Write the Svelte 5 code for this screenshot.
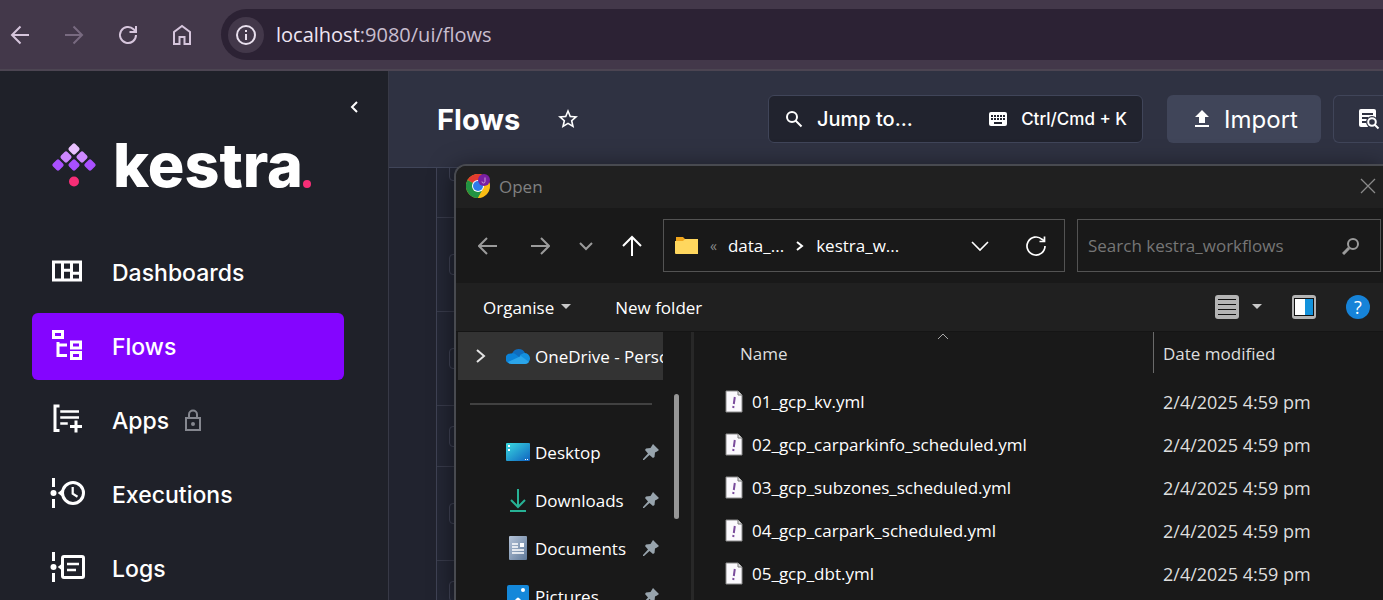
<script>
  const nav = [
    { label: 'Dashboards', icon: 'dashboard' },
    { label: 'Flows', icon: 'flows', active: true },
    { label: 'Apps', icon: 'apps', locked: true },
    { label: 'Executions', icon: 'executions' },
    { label: 'Logs', icon: 'logs' }
  ];
  const rows = [94, 94, 94, 61, 94, 61];
  const places = ['Desktop', 'Downloads', 'Documents', 'Pictures'];
  const files = [
    '01_gcp_kv.yml',
    '02_gcp_carparkinfo_scheduled.yml',
    '03_gcp_subzones_scheduled.yml',
    '04_gcp_carpark_scheduled.yml',
    '05_gcp_dbt.yml'
  ];
</script>

<div class="screen">
  <header class="browser">
    <button class="tool" aria-label="Back">
      <svg width="24" height="24" viewBox="0 0 24 24" fill="none" stroke="#d6c5dc" stroke-width="2"><path d="M21 12H4.500M12.500 3.500 4 12l8.500 8.500" /></svg>
    </button>
    <button class="tool" aria-label="Forward">
      <svg width="24" height="24" viewBox="0 0 24 24" fill="none" stroke="#786a80" stroke-width="2"><path d="M3 12h16.500M11.500 3.500 20 12l-8.500 8.500" /></svg>
    </button>
    <button class="tool" aria-label="Reload">
      <svg width="24" height="24" viewBox="0 0 24 24" fill="none" stroke="#d6c5dc" stroke-width="2"><path d="M20 12a8 8 0 1 1-2.400-5.700L20 8.600" /><path d="M20 3v6h-6.500" /></svg>
    </button>
    <button class="tool" aria-label="Home">
      <svg width="24" height="24" viewBox="0 0 24 24" fill="none" stroke="#d6c5dc" stroke-width="2"><path d="M4 21V9l8-6 8 6v12h-5.500v-7h-5v7z" /></svg>
    </button>
    <div class="omnibox">
      <span class="info">
        <svg width="22" height="22" viewBox="0 0 22 22" fill="none" stroke="#e9e0ee" stroke-width="2"><circle cx="11" cy="11" r="9" /><path d="M11 10v6M11 6v2" /></svg>
      </span>
      <span class="url"><b>localhost</b>:9080/ui/flows</span>
    </div>
  </header>

  <div class="app">
    <aside>
      <button class="collapse" aria-label="Collapse menu">
        <svg width="12" height="14" viewBox="0 0 12 14" fill="none" stroke="#fff" stroke-width="2"><path d="M9 2 4 7l5 5" /></svg>
      </button>
      <a class="logo" href="#home">
        <svg width="44" height="46" viewBox="0 0 44 46">
          <g fill="#e9c1ff"><rect x="-4.500" y="-4.500" width="9" height="9" rx="2" transform="translate(22 7) rotate(45)" /></g>
          <g fill="#cd88ff">
            <rect x="-4.500" y="-4.500" width="9" height="9" rx="2" transform="translate(14 15) rotate(45)" />
            <rect x="-4.500" y="-4.500" width="9" height="9" rx="2" transform="translate(30 15) rotate(45)" />
          </g>
          <g fill="#a950ff">
            <rect x="-4.500" y="-4.500" width="9" height="9" rx="2" transform="translate(6 23) rotate(45)" />
            <rect x="-4.500" y="-4.500" width="9" height="9" rx="2" transform="translate(22 23) rotate(45)" />
            <rect x="-4.500" y="-4.500" width="9" height="9" rx="2" transform="translate(38 23) rotate(45)" />
          </g>
          <circle cx="22" cy="39.500" r="5" fill="#f62e76" />
        </svg>
        <span class="word">kestra</span><i class="dot"></i>
      </a>
      <nav>
        {#each nav as item}
          <a href="#{item.icon}" class:active={item.active}>
            <svg class="glyph" width="36" height="36" viewBox="0 0 24 24" fill="none" stroke="#fff" stroke-width="2">
              {#if item.icon === 'dashboard'}
                <path d="M3 6h18v12H3zM9 6v12M15 6v12M9 11.500h6M15 13.500h6" />
              {:else if item.icon === 'flows'}
                <path stroke="none" fill="#fff" d="M12,13H7V18H12V20H5V10H7V11H12V13M8,4V6H4V4H8M10,2H2V8H10V2M20,11V13H16V11H20M22,9H14V15H22V9M20,18V20H16V18H20M22,16H14V22H22V16Z" />
              {:else if item.icon === 'apps'}
                <path d="M7 3.300H4v16.400h3" />
                <path stroke-width="1.700" d="M7.500 7H20M7.500 11H20M7.500 15h5" />
                <path stroke="#1f2129" stroke-width="5" d="M18 13v8M14 17h8" />
                <path d="M18 13v8M14 17h8" />
              {:else}
                <path d="M3 2v6M3 16v6" />
                <circle cx="3" cy="12" r="2" fill="#fff" stroke="none" />
                <path d="M5.800 12 9 9.500v5z" fill="#fff" stroke="none" />
                {#if item.icon === 'executions'}
                  <circle cx="16" cy="12" r="7" />
                  <path stroke-width="1.500" d="M15.800 8v4.500l3.200 2" />
                {:else}
                  <rect x="9" y="5" width="14" height="14" rx="1" />
                  <path stroke-width="1.700" d="M12 10h8M12 14h6" />
                {/if}
              {/if}
            </svg>
            <span>{item.label}</span>
            {#if item.locked}
              <svg class="lock" width="24" height="24" viewBox="0 0 24 24" fill="none" stroke="#85878f" stroke-width="2"><path d="M5 9h14v12H5zM8 9V5.500a4 4 0 0 1 8 0V9" /><circle cx="12" cy="15" r="1" /></svg>
            {/if}
          </a>
        {/each}
      </nav>
    </aside>

    <main>
      <div class="topbar">
        <h1>Flows</h1>
        <button class="star" aria-label="Bookmark">
          <svg width="24" height="24" viewBox="0 0 24 24" fill="#fff"><path d="M12,15.39L8.24,17.66L9.23,13.38L5.91,10.5L10.29,10.13L12,6.09L13.71,10.13L18.09,10.5L14.77,13.38L15.76,17.66M22,9.24L14.81,8.63L12,2L9.19,8.63L2,9.24L7.45,13.97L5.82,21L12,17.27L18.18,21L16.54,13.97L22,9.24Z" /></svg>
        </button>
        <button class="jump">
          <svg width="20" height="20" viewBox="0 0 20 20" fill="none" stroke="#fff" stroke-width="2"><circle cx="8" cy="8" r="5" /><path d="m11.500 11.500 6 6" /></svg>
          <span>Jump to...</span>
          <span class="keys">
            <svg width="20" height="16" viewBox="0 0 20 16"><rect x="1" y="1" width="18" height="14" rx="2" fill="#fff" /><path stroke="#21232e" stroke-width="2" stroke-dasharray="2 1" d="M3 5h14M3 8h14" /><path stroke="#21232e" stroke-width="2" d="M6 12h8" /></svg>
            Ctrl/Cmd + K
          </span>
        </button>
        <button class="import">
          <svg width="24" height="24" viewBox="0 0 24 24" fill="#fff"><path d="M9 16v-6H5l7-7 7 7h-4v6H9m-4 4v-2h14v2H5z" /></svg>
          <span>Import</span>
        </button>
        <button class="source" aria-label="Source search">
          <svg width="24" height="24" viewBox="0 0 24 24"><path fill="#fff" d="M5 2h13a2 2 0 0 1 2 2v16H5a2 2 0 0 1-2-2V4a2 2 0 0 1 2-2z" /><path stroke="#2f3242" stroke-width="2" d="M6 7h11M6 11h6M6 15h4" /><circle cx="16" cy="15" r="6" fill="#2f3242" /><path stroke="#2f3242" stroke-width="5" d="m17 16 5 6" /><circle cx="16" cy="15" r="3.800" fill="none" stroke="#fff" stroke-width="2" /><path stroke="#fff" stroke-width="2" d="m18.500 17.500 4 4" /></svg>
        </button>
      </div>
      <div class="content">
        <div class="rows">
          {#each rows as h, i}
            <div class="row" style="height: {h}px"><input type="checkbox" aria-label="Select flow {i + 1}" /></div>
          {/each}
        </div>
      </div>
    </main>
  </div>

  <section class="dialog" aria-label="Open">
    <div class="title">
      <svg width="24" height="24" viewBox="0 0 24 24">
        <circle cx="12" cy="12" r="12" fill="#f9bd15" />
        <path fill="#e33b2e" d="M12 12 1.600 6A12 12 0 0 1 22.400 6z" />
        <path fill="#229342" d="M12 12 1.600 6A12 12 0 0 0 12 24l5-9z" />
        <path fill="#f9bd15" d="m17 15-5 9A12 12 0 0 0 22.400 7H13z" />
        <circle cx="12" cy="12" r="6" fill="#fff" />
        <circle cx="12" cy="12" r="5" fill="#2f7bea" />
        <circle cx="18" cy="6" r="6" fill="#7a1fa2" />
        <path d="M19 3.500v4a1.500 1.500 0 0 1-3 0" fill="none" stroke="#c9a0da" />
      </svg>
      <span>Open</span>
      <button class="close" aria-label="Close">
        <svg width="16" height="16" viewBox="0 0 16 16" stroke="#8a8a8a" stroke-width="1.300"><path d="m1 1 14 14M15 1 1 15" /></svg>
      </button>
    </div>

    <div class="pathbar">
      <div class="arrows">
        <button aria-label="Back"><svg width="20" height="20" viewBox="0 0 20 20" fill="none" stroke="#9b9b9b" stroke-width="2"><path d="M19 10H2M9 2l-8 8 8 8" /></svg></button>
        <button aria-label="Forward"><svg width="20" height="20" viewBox="0 0 20 20" fill="none" stroke="#9b9b9b" stroke-width="2"><path d="M1 10h17M11 2l8 8-8 8" /></svg></button>
        <button aria-label="Recent locations"><svg width="14" height="20" viewBox="0 0 14 20" fill="none" stroke="#9b9b9b" stroke-width="2"><path d="m1 7 6 6 6-6" /></svg></button>
        <button aria-label="Up"><svg width="20" height="22" viewBox="0 0 20 22" fill="none" stroke="#fff" stroke-width="2"><path d="M10 21V3M1 11l9-9 9 9" /></svg></button>
      </div>
      <div class="address">
        <svg width="24" height="20" viewBox="0 0 24 20"><path fill="#f0a51c" d="M1 1h7l2 2h12v6H1z" /><path fill="#ffd75e" d="M0 5h8l2-2h13v15H1q-1 0-1-1z" /></svg>
        <span class="more">«</span>
        <span>data_...</span>
        <svg width="10" height="14" viewBox="0 0 10 14" fill="none" stroke="#fff" stroke-width="2"><path d="m2 3 5 4-5 4" /></svg>
        <span>kestra_w...</span>
        <button class="drop" aria-label="Previous locations"><svg width="18" height="12" viewBox="0 0 18 12" fill="none" stroke="#fff" stroke-width="1.600"><path d="m1 2 8 8 8-8" /></svg></button>
        <button aria-label="Refresh"><svg width="22" height="22" viewBox="0 0 22 22" fill="none" stroke="#fff" stroke-width="1.700"><path d="M20 11a9 9 0 1 1-3-6.700L19.500 6" /><path d="M19.500 1.500V6.500h-5" /></svg></button>
      </div>
      <label class="search">
        <input type="text" placeholder="Search kestra_workflows" aria-label="Search kestra_workflows" />
        <svg width="18" height="18" viewBox="0 0 18 18" fill="none" stroke="#9b9b9b" stroke-width="2"><circle cx="11" cy="7" r="5" /><path stroke-width="3" d="m7 11-6 6" /></svg>
      </label>
    </div>

    <div class="commands">
      <button>Organise <i class="caret"></i></button>
      <button>New folder</button>
      <span class="views">
        <button aria-label="Change view"><svg width="24" height="24" viewBox="0 0 24 24"><rect width="24" height="24" rx="3" fill="#b4b4b4" /><path stroke="#111" stroke-width="1.200" d="M3 4.500h18M3 9.500h18M3 14.500h18M3 19.500h18" /></svg></button>
        <button class="viewmore" aria-label="More views"><i class="caret"></i></button>
        <button class="preview" aria-label="Preview pane"><svg width="24" height="24" viewBox="0 0 24 24"><rect width="24" height="24" rx="3" fill="#b4b4b4" /><rect x="2.500" y="3.500" width="19" height="17" fill="#fff" stroke="#111" /><path fill="#1292dc" d="M13 4h8v16h-8z" /></svg></button>
        <button class="help" aria-label="Help">?</button>
      </span>
    </div>

    <div class="panes">
      <div class="tree">
        <div class="item drive">
          <svg width="12" height="16" viewBox="0 0 12 16" fill="none" stroke="#e4e4e4" stroke-width="2"><path d="m2 2 7 6-7 6" /></svg>
          <svg class="pic" width="24" height="16" viewBox="0 0 24 16"><path fill="#0f6cbd" d="M6 6a7 7 0 0 1 13-1l-7 7z" /><path fill="#0b83d9" d="M5 5.500a5 5 0 0 1 5 1l6 5-12 4a5 5 0 0 1 1-10z" /><path fill="#1490df" d="m14 7 4-2a5.500 5.500 0 0 1 1 11h-5z" /><path fill="#2ba5ea" d="m2 14 13-6 8 6q-1.500 2-4 2H5q-2 0-3-2z" /></svg>
          <span>OneDrive - Personal</span>
        </div>
        <div class="item"><hr /></div>
        {#each places as place, i}
          <div class="item">
            <svg class="pic" width="24" height="24" viewBox="0 0 24 24">
              {#if i === 0}
                <linearGradient id="desk" x2="1" y2="1"><stop stop-color="#3adbe0" /><stop offset="1" stop-color="#0f62c0" /></linearGradient>
                <rect y="3" width="24" height="18" rx="1" fill="url(#desk)" /><path fill="#fff" d="M2 5h2v2H2zM2 9h2v2H2zM19 19h1v1h-1zM21 19h1v1h-1z" />
              {:else if i === 1}
                <path fill="none" stroke="#27b295" stroke-width="2" d="M12 1v17M5 12l7 7 7-7M4 23h16" />
              {:else if i === 2}
                <linearGradient id="doc" x2="1" y2="1"><stop stop-color="#b4c3d8" /><stop offset="1" stop-color="#5f7998" /></linearGradient>
                <rect x="3" width="18" height="24" rx="1" fill="url(#doc)" /><path stroke="#fff" stroke-width="1.300" d="M6 8h6M6 11h6M6 14h12M6 17h12" /><path fill="#fff" d="M14 7h4v4h-4z" />
              {:else}
                <rect x="1" y="1" width="22" height="22" rx="2" fill="#1488da" /><circle cx="17" cy="6" r="2" fill="#fff" /><path fill="#fff" d="m7 18 4-4q1-1 2 0l4 4z" />
              {/if}
            </svg>
            <span>{place}</span>
            <svg class="pin" width="16" height="16" viewBox="0 0 16 16"><path fill="#98a4ad" d="M10 0l6 6-2 1.500-2 1-.5 4.500-1.500 1L6.500 11 1 16H0v-1l5-5.500L2 6l1-1.500L7.500 4z" /></svg>
          </div>
        {/each}
      </div>
      <div class="gutter"><i></i></div>
      <div class="list">
        <table>
          <thead>
            <tr><th>Name</th><th>Date modified</th></tr>
          </thead>
          <tbody>
            {#each files as file}
              <tr>
                <td>
                  <div class="file">
                    <svg width="18" height="24" viewBox="0 0 18 24"><path fill="#fbf9fd" stroke="#8b8b8b" d="M1 1h12l4 4v17H1z" /><path fill="#ddd" stroke="#777" d="M13 1v4h4" /><path stroke="#7a4b9c" stroke-width="2" d="m9.800 7-1 7M8.500 16l-.3 2" /></svg>
                    {file}
                  </div>
                </td>
                <td>2/4/2025 4:59 pm</td>
              </tr>
            {/each}
          </tbody>
        </table>
        <svg class="sort" width="12" height="8" viewBox="0 0 12 8" fill="none" stroke="#a8a8a8"><path d="m1 6 5-5 5 5" /></svg>
      </div>
    </div>
  </section>
</div>

<style>
  :global(body) { margin: 0; background: #1f2129; }
  * { box-sizing: border-box; }
  button { padding: 0; border: 0; background: none; color: inherit; font: inherit; display: flex; align-items: center; justify-content: center; }
  a { color: inherit; text-decoration: none; }
  svg { display: block; flex: none; }

  .screen { position: relative; display: flex; flex-direction: column; height: 100vh; overflow: hidden; color: #fff; font-family: Inter, sans-serif; }

  .browser { display: flex; align-items: center; flex: none; height: 71px; padding-left: 8px; gap: 30px; background: #43384a; border-bottom: 2px solid #4c4552; }
  .tool { width: 24px; height: 24px; }
  .omnibox { display: flex; align-items: center; flex: 1; height: 51px; gap: 12px; margin-left: -3px; padding-left: 7px; border-radius: 26px 0 0 26px; background: #2c2234; }
  .info { display: grid; place-items: center; width: 36px; height: 36px; border-radius: 50%; background: #43384a; }
  .url { color: #c8bdce; font: 20px "Open Sans", sans-serif; }
  .url b { color: #efe6f3; font-weight: 400; }

  .app { display: flex; flex: 1; min-height: 0; }
  aside { display: flex; flex-direction: column; flex: none; width: 389px; padding: 28px 44px 0 32px; background: #1f2129; border-right: 1px solid #373946; }
  .collapse { align-self: flex-end; flex: none; width: 24px; height: 16px; margin-right: -22px; }
  .logo { display: flex; align-items: flex-end; flex: none; height: 73px; padding-left: 20px; }
  .word { margin-left: 17px; font-size: 61px; font-weight: 800; line-height: 46px; }
  .dot { width: 8px; height: 8px; border-radius: 50%; background: #f62e76; }
  nav { display: flex; flex-direction: column; gap: 7px; margin-top: 51px; }
  nav a { display: flex; align-items: center; flex: none; height: 67px; padding-left: 17px; border-radius: 6px; font-size: 23px; font-weight: 500; }
  nav span { margin-left: 27px; }
  nav .active { background: #8405ff; }
  .glyph { margin-bottom: 4px; }
  .lock { margin-left: 12px; }

  main { display: flex; flex-direction: column; flex: 1; min-width: 0; }
  .topbar { position: relative; display: flex; align-items: center; flex: none; height: 97px; padding-left: 48px; background: #2f3242; border-bottom: 1px solid #404559; }
  h1 { margin: 0; font-size: 29px; font-weight: 700; }
  .star { margin-left: 36px; }
  .jump { justify-content: flex-start; flex: 0 1 375px; height: 48px; margin-left: auto; padding: 0 15px; gap: 13px; border: 1px solid #404559; border-radius: 6px; background: #21232e; font-size: 20px; font-weight: 500; }
  .keys { display: flex; align-items: center; gap: 13px; margin-left: auto; font-size: 17px; }
  .import { width: 154px; height: 48px; margin-left: 24px; gap: 10px; border-radius: 6px; background: #404559; font-size: 24px; }
  .source { width: 50px; height: 48px; margin-left: 12px; padding-left: 18px; border: 1px solid #404559; border-right: 0; border-radius: 6px 0 0 6px; }
  .content { flex: 1; overflow: hidden; padding-left: 47px; background: #21232f; }
  .rows { margin-top: -44px; border-left: 1px solid #404356; background: #242735; }
  .row { display: flex; align-items: center; padding-left: 12px; border-bottom: 1px solid #383b4b; }
  .row input { appearance: none; width: 21px; height: 21px; margin: 0; border: 1px solid #404356; border-radius: 4px; }

  .dialog { position: absolute; top: 164px; right: 0; bottom: 0; left: 454px; display: flex; flex-direction: column; border: 2px solid #484a50; border-right: 0; border-bottom: 0; border-radius: 12px 0 0 0; background: #191919; overflow: hidden; box-shadow: 0 4px 24px #0008; font: 17px "Open Sans", sans-serif; }
  .title { display: flex; align-items: center; flex: none; height: 42px; padding: 0 7px 2px 10px; gap: 9px; background: #202020; color: #808080; }
  .close { margin-left: auto; }
  .pathbar { display: flex; align-items: center; flex: none; height: 75px; padding-right: 2px; gap: 12px; }
  .arrows { display: flex; align-items: center; gap: 32px; flex: none; width: 195px; padding-left: 22px; }
  .arrows button:nth-child(3) { margin: 0 -3px; }
  .address, .search { display: flex; align-items: center; height: 53px; border: 1px solid #535353; }
  .address { flex: 1 1 402px; padding: 0 17px 0 11px; gap: 11px; }
  .more { color: #8a8a8a; font-size: 14px; }
  .drop { margin-left: auto; margin-right: 25px; }
  .search { flex: 1 1 304px; padding: 0 20px 0 10px; }
  .search input { flex: 1; min-width: 0; padding: 0; border: 0; outline: 0; background: none; color: #fff; font: inherit; }
  .search input::placeholder { color: #767676; opacity: 1; }
  .commands { display: flex; align-items: center; flex: none; height: 49px; padding: 0 13px 0 27px; gap: 44px; background: #202020; border-bottom: 1px solid #151515; }
  .caret { width: 0; height: 0; margin: 0 0 2px 7px; border: 5px solid transparent; border-top-color: #c8c8c8; border-bottom: 0; }
  .views { display: flex; align-items: center; margin-left: auto; }
  .viewmore { margin-left: 6px; }
  .preview { margin: 0 30px; }
  .help { width: 24px; height: 24px; border-radius: 50%; background: #1683d8; font-size: 18px; line-height: 24px; }

  .panes { display: flex; flex: 1; min-height: 0; }
  .tree { flex: none; width: 207px; padding-left: 2px; overflow: hidden; }
  .item { display: flex; align-items: center; height: 48px; padding: 0 4px 0 48px; white-space: nowrap; }
  .item span { margin-left: 5px; }
  .item hr { flex: 1; height: 2px; margin: 0 7px 0 -36px; border: 0; background: #414141; }
  .drive { padding: 0 0 0 17px; background: #333; }
  .drive .pic { margin-left: 19px; }
  .pin { margin-left: auto; }
  .gutter { flex: none; width: 31px; padding: 62px 0 0 11px; border-right: 3px solid #282828; }
  .gutter i { display: block; width: 5px; height: 125px; border-radius: 3px; background: #969696; }
  .list { position: relative; flex: 1; min-width: 0; }
  .sort { position: absolute; top: 1px; left: 243px; }
  table { width: 100%; border-collapse: collapse; table-layout: fixed; }
  th { height: 42px; padding: 0 0 0 46px; color: #dedede; font-weight: 400; text-align: left; }
  th:first-child { width: 460px; background: linear-gradient(#6a6a6a, #6a6a6a) right top / 1px 41px no-repeat; }
  th + th, td + td { padding-left: 9px; color: #dedede; }
  td + td { font-size: 18px; }
  tbody::before { content: ""; display: block; height: 6px; }
  td { height: 43px; padding: 0 0 0 31px; white-space: nowrap; }
  .file { display: flex; align-items: center; gap: 9px; }
</style>
